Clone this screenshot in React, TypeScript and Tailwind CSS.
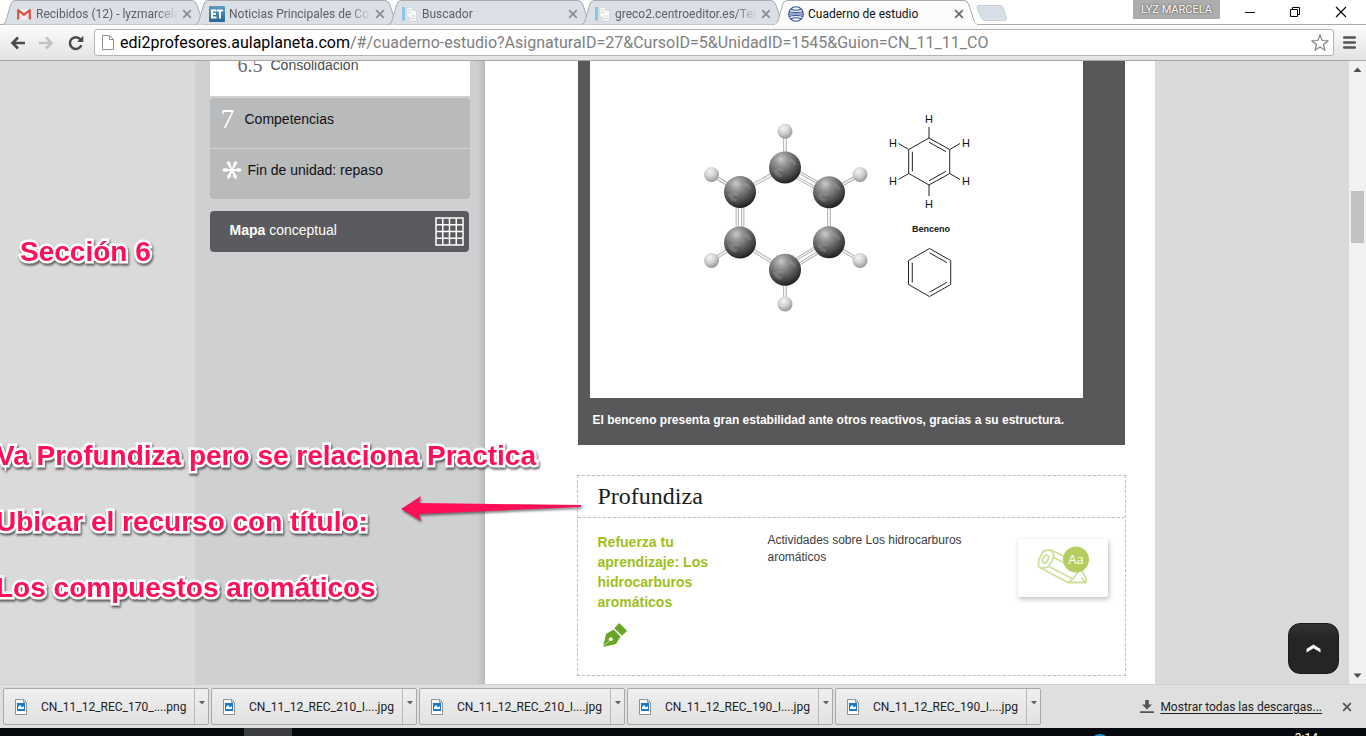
import type { ReactNode } from "react";

const uiFont = "font-['Roboto','Noto_Sans',sans-serif]";

function GmailIcon() {
  return (
    <svg viewBox="0 0 16 16" className="size-4">
      <rect x="1.5" y="3" width="13" height="10.5" fill="#f1ece9" />
      <path d="M2 13.5 6 9M14 13.5 10 9" stroke="#d8cfcb" strokeWidth="1" />
      <path d="M2.2 13.5V4L8 8.8 13.8 4v9.5" fill="none" stroke="#d9534a" strokeWidth="2.2" strokeLinejoin="round" />
    </svg>
  );
}

function NewsIcon() {
  return (
    <svg viewBox="0 0 16 16" className="size-4">
      <defs>
        <linearGradient id="news" x1="0" y1="0" x2="0" y2="1">
          <stop offset="0" stopColor="#5f9cc4" />
          <stop offset="1" stopColor="#256695" />
        </linearGradient>
      </defs>
      <rect width="16" height="16" rx="1" fill="url(#news)" />
      <path d="M2 3.5h5.5v2H4v1.6h3v1.8H4v1.6h3.5v2H2zM8 3.5h6v2h-2v7H9.900v-7H8z" fill="#fff" />
    </svg>
  );
}

function DocsIcon() {
  return (
    <svg viewBox="0 0 16 16" className="size-4">
      <rect x="0" y="1" width="3" height="13.5" fill="#8cc4e6" />
      <path d="M5 1.5h5.5v3h4V15H8v-4H5z" fill="#fafbfb" stroke="#c9ced3" strokeWidth=".6" />
      <path d="M6 4h3.5M6 6.5h3.5M9 10h4.5M9 12.5h4.5" stroke="#d0d4d8" strokeWidth="1" />
    </svg>
  );
}

function GlobeIcon() {
  return (
    <svg viewBox="0 0 16 16" className="size-4" fill="none" stroke="#2f4d94" strokeWidth="1.1">
      <circle cx="8" cy="8" r="7.3" />
      <path d="M2.8 3Q8 5.6 13.2 3M1.2 5.7q6.8 1.6 13.6 0M.8 8h14.4M1.2 10.3q6.8-1.6 13.6 0M2.8 13Q8 10.4 13.2 13" />
    </svg>
  );
}

function CloseGlyph({ color = "#8a8d91" }: { color?: string }) {
  return (
    <svg viewBox="0 0 10 10" className="size-2.5">
      <path d="M1.2 1.2 8.8 8.8M8.8 1.2 1.2 8.8" stroke={color} strokeWidth="1.7" />
    </svg>
  );
}

type TabInfo = { title: string; icon: ReactNode; active?: boolean };

const tabs: TabInfo[] = [
  { title: "Recibidos (12) - lyzmarcela", icon: <GmailIcon /> },
  { title: "Noticias Principales de Co", icon: <NewsIcon /> },
  { title: "Buscador", icon: <DocsIcon /> },
  { title: "greco2.centroeditor.es/Ter", icon: <DocsIcon /> },
  { title: "Cuaderno de estudio", icon: <GlobeIcon />, active: true },
];

function Tab({ title, icon, active }: TabInfo) {
  return (
    <div className={`relative h-[25px] w-[204px] -mr-[11px] ${active ? "z-10" : ""}`}>
      <svg viewBox="0 0 204 25" className="absolute inset-0 size-full">
        <path
          d="M0 24.5C3 24.5 3.5 22 4.5 19L8.5 5Q9.8 .5 13 .5H190Q193.5 .5 195 5L199.5 19C200.5 22 201 24.5 204 24.5"
          fill={active ? "#fcfcfc" : "#dbe0e7"}
          stroke="#a9abae"
        />
        {active && <path d="M1 24.5h202" stroke="#fcfcfc" strokeWidth="2" />}
      </svg>
      <div className="relative flex h-full items-center pt-0.5 pr-3.5 pl-3.5">
        {icon}
        <button
          className={`ml-1 w-[142px] overflow-hidden text-left text-xs whitespace-nowrap ${
            active ? "text-[#111]" : "mask-r-from-85% text-[#5d6064]"
          }`}
        >
          {title}
        </button>
        <button aria-label={`Cerrar ${title}`} className="ml-auto">
          <CloseGlyph color={active ? "#66686b" : "#8a8d91"} />
        </button>
      </div>
    </div>
  );
}

function TabStrip() {
  return (
    <header className="relative flex h-[25px] shrink-0 justify-between bg-white">
      <div className="absolute inset-x-0 bottom-0 h-px bg-[#a9abae]" />
      <div className="flex pl-0.5">
        {tabs.map((t) => (
          <Tab key={t.title} {...t} />
        ))}
        <button aria-label="Nueva pestaña" className="ml-2 h-[25px] w-8">
          <svg viewBox="0 0 32 25" className="h-full w-full">
            <path d="M3 5.5h22q2 0 3 2l3.5 10q.6 3-1.5 3H10q-2.5 0-3.5-2.5L2 8q-.5-2.5 1-2.5z" fill="#d8dee6" stroke="#c3c8ce" strokeWidth=".8" />
          </svg>
        </button>
      </div>
      <div className="flex">
        <button className="mr-[23px] h-[19px] w-[87px] bg-[#adadad] text-[11px] leading-[18px] text-white text-shadow-[0_0_2px_#222]">
          LYZ MARCELA
        </button>
        <button aria-label="Minimizar" className="w-[14px]">
          <svg viewBox="0 0 14 25" className="w-full">
            <path d="M2 12.5h10" stroke="#000" />
          </svg>
        </button>
        <button aria-label="Restaurar" className="ml-[31px] w-[14px]">
          <svg viewBox="0 0 14 25" className="w-full" fill="none" stroke="#000">
            <path d="M2.5 9.5h7v7h-7zM4.5 9V7.5h7v7H10" />
          </svg>
        </button>
        <button aria-label="Cerrar" className="mr-[18px] ml-[32px] w-[14px]">
          <svg viewBox="0 0 14 25" className="w-full">
            <path d="M2 7l10 10M12 7 2 17" stroke="#000" strokeWidth="1.1" />
          </svg>
        </button>
      </div>
    </header>
  );
}

function Toolbar() {
  return (
    <div className="flex h-9 shrink-0 items-center border-b border-[#a6a6a6] bg-linear-to-b from-[#fcfcfc] to-[#e3e3e3] pr-2.5 pl-2.5">
      <button aria-label="Atrás" className="mr-[14px]">
        <svg viewBox="0 0 15 14" className="w-[15px]">
          <path d="M15 7H2.5M8 1.5 2.5 7 8 12.5" fill="none" stroke="#4b4b4b" strokeWidth="2.6" />
        </svg>
      </button>
      <button aria-label="Adelante" className="mr-[14px]">
        <svg viewBox="0 0 15 14" className="w-[15px]">
          <path d="M0 7h12.5M7 1.5 12.5 7 7 12.5" fill="none" stroke="#c3c3c3" strokeWidth="2.6" />
        </svg>
      </button>
      <button aria-label="Recargar" className="mr-2.5">
        <svg viewBox="0 0 16 16" className="size-4">
          <path d="M13.3 10.2A5.9 5.9 0 1 1 12.3 4.2" fill="none" stroke="#4b4b4b" strokeWidth="2.5" />
          <path d="M15.3.8V7H9z" fill="#4b4b4b" />
        </svg>
      </button>
      <div className="flex h-[27px] min-w-0 flex-1 items-center rounded-[3px] border border-[#b3b3b3] bg-white pr-1 pl-[7px]">
        <svg viewBox="0 0 12 15" className="mr-1.5 w-3 shrink-0">
          <path d="M.5.5h7l4 4v10H.5zM7.5.5v4h4" fill="#fff" stroke="#8f8f8f" />
        </svg>
        <label htmlFor="url" className="text-base text-black">
          edi2profesores.aulaplaneta.com
        </label>
        <input
          id="url"
          type="text"
          defaultValue="/#/cuaderno-estudio?AsignaturaID=27&CursoID=5&UnidadID=1545&Guion=CN_11_11_CO"
          className="min-w-0 flex-1 bg-transparent text-base text-[#808080] outline-none"
        />
        <button aria-label="Añadir a marcadores">
          <svg viewBox="0 0 18 18" className="size-[18px]">
            <path d="M9 .8l2.1 5.7 6.1.2-4.8 3.8 1.7 5.9L9 13l-5.1 3.4 1.7-5.9L.8 6.7l6.1-.2z" fill="#fff" stroke="#808080" strokeWidth="1.1" strokeLinejoin="round" />
          </svg>
        </button>
      </div>
      <button aria-label="Menú" className="ml-[9px]">
        <svg viewBox="0 0 13 13" className="w-[13px]">
          <path d="M1.2 1.5h10.6M1.2 6.5h10.6M1.2 11.5h10.6" stroke="#555" strokeWidth="2.6" strokeLinecap="round" />
        </svg>
      </button>
    </div>
  );
}

function Sidebar() {
  return (
    <aside className="w-[290px] shrink-0 bg-[#cfd0d2] bg-linear-to-l from-[#b9babc] to-transparent to-[8px] pl-[15px] text-[14px] leading-5">
      <ul className="w-[260px]">
        <li className="flex h-[51px] items-start bg-white pt-2.5 pl-7 text-[#4a4a4a]">
          <a href="#6.5" className="flex items-center">
            <span className="mr-2 font-['Liberation_Serif',serif] text-xl leading-5 text-[#6b6b6d]">6.5</span>
            Consolidación
          </a>
        </li>
      </ul>
      <ul className="mt-0.5 w-[260px] overflow-hidden rounded bg-[#b8babc] text-[#111]">
        <li className="h-[51px] border-b border-[#d2d3d4]">
          <a href="#7" className="flex h-full items-center pb-2 pl-[11px]">
            <span className="w-6 font-['Liberation_Serif',serif] text-[28px] text-white">7</span>
            Competencias
          </a>
        </li>
        <li className="h-[50px]">
          <a href="#fin" className="flex h-full items-center pb-2 pl-3">
            <svg viewBox="0 0 20 20" className="mr-1.5 size-5" stroke="#fff" strokeLinecap="round">
              <path d="M10 10 6.5 3.5M10 10l3.5-6.5M10 10H3M10 10h7M10 10l-3.5 6.5M10 10l3.5 6.5" strokeWidth="2" />
              <path d="M7.3 4.4 6.5 3M12.7 4.4 13.5 3M4 10H2.3M16 10h1.7M7.3 15.6 6.5 17M12.7 15.6l.8 1.4" strokeWidth="3.4" />
            </svg>
            Fin de unidad: repaso
          </a>
        </li>
      </ul>
      <a href="#mapa" className="mt-3 flex h-[41px] w-[259px] items-center rounded bg-[#5b5a5e] pr-[5px] pl-5 text-white">
        <span className="flex-1 pb-1">
          <b>Mapa</b> conceptual
        </span>
        <svg viewBox="0 0 29 29" className="size-[29px]" fill="none" stroke="#fff" strokeWidth="1.5">
          <path d="M1 1h27v27H1zM7.75 1v27M14.5 1v27M21.25 1v27M1 7.75h27M1 14.5h27M1 21.25h27" />
        </svg>
      </a>
    </aside>
  );
}

type Point = [number, number];

const carbons: Point[] = [
  [785, 167.5],
  [829, 192.3],
  [829, 242.3],
  [785, 269.7],
  [740, 242.5],
  [740, 192],
];
const hydrogens: Point[] = [
  [785, 131.3],
  [860, 174.5],
  [860, 260.5],
  [785, 304],
  [711.5, 260.5],
  [711.5, 174.5],
];
const skeleton: Point[] = [
  [929, 138],
  [949.7, 149.5],
  [949.7, 173.5],
  [929, 185],
  [908.7, 173.5],
  [908.7, 149.5],
];
const labels: Point[] = [
  [929, 123],
  [966, 146.5],
  [966, 185],
  [929, 208],
  [893, 185],
  [893, 146.5],
];
const stubs: Point[] = [
  [929, 127],
  [960, 143.5],
  [960, 179.5],
  [929, 196],
  [898.5, 179.5],
  [898.5, 143.5],
];
const simple: Point[] = [
  [929.5, 248.5],
  [950.7, 260.5],
  [950.7, 284.5],
  [929.5, 296.5],
  [908.5, 284.5],
  [908.5, 260.5],
];

function Rod({ a, b, shift = 0, width = 3.4 }: { a: Point; b: Point; shift?: number; width?: number }) {
  const len = Math.hypot(b[0] - a[0], b[1] - a[1]);
  const nx = (-(b[1] - a[1]) / len) * shift;
  const ny = ((b[0] - a[0]) / len) * shift;
  const d = `M${a[0] + nx} ${a[1] + ny}L${b[0] + nx} ${b[1] + ny}`;
  return (
    <>
      <path d={d} stroke="#a0a0a0" strokeWidth={width} />
      <path d={d} stroke="#f0f0f0" strokeWidth={width - 1.4} />
    </>
  );
}

function ring(points: Point[]) {
  const cx = (points[0][0] + points[3][0]) / 2;
  const cy = (points[0][1] + points[3][1]) / 2;
  const inner = points.map(([x, y]): Point => [cx + (x - cx) * 0.82, cy + (y - cy) * 0.82]);
  const outline = `M${points.map((p) => p.join(" ")).join("L")}Z`;
  const doubles = [0, 2, 4].map((i) => `M${inner[i].join(" ")}L${inner[i + 1].join(" ")}`).join("");
  return outline + doubles;
}

function Benzene() {
  return (
    <svg viewBox="590 45 493 353" className="block w-full bg-white" role="img" aria-label="Benceno">
      <defs>
        <radialGradient id="carbon" cx=".38" cy=".24" r=".8">
          <stop offset="0" stopColor="#cacac8" />
          <stop offset=".2" stopColor="#a0a09e" />
          <stop offset=".5" stopColor="#6c6c6a" />
          <stop offset=".8" stopColor="#3c3c3a" />
          <stop offset="1" stopColor="#181816" />
        </radialGradient>
        <radialGradient id="hydrogen" cx=".4" cy=".3" r=".75">
          <stop offset="0" stopColor="#f6f6f6" />
          <stop offset=".5" stopColor="#cecece" />
          <stop offset="1" stopColor="#8d8d8d" />
        </radialGradient>
      </defs>
      {carbons.map((c, i) => {
        const next = carbons[(i + 1) % 6];
        return (
          <g key={i}>
            <Rod a={c} b={hydrogens[i]} />
            {i % 2 === 0 ? (
              <>
                <Rod a={c} b={next} shift={-2.8} width={3} />
                <Rod a={c} b={next} shift={2.8} width={3} />
              </>
            ) : (
              <Rod a={c} b={next} />
            )}
          </g>
        );
      })}
      {hydrogens.map(([x, y], i) => (
        <circle key={i} cx={x} cy={y} r="7.5" fill="url(#hydrogen)" />
      ))}
      {carbons.map(([x, y], i) => (
        <g key={i} transform={`translate(${x} ${y})`}>
          <circle r="16" fill="url(#carbon)" />
          <path d="M-12 2q1 7 8 8l2-3q-5 0-5-5zM-8 1q2 3 6 3l1-3q-4 1-5-1zM5-9q5 1 6 6l-2 1q-1-4-5-4z" fill="#b5b5b5" opacity=".28" />
        </g>
      ))}
      <g fill="none" stroke="#222" strokeWidth="1">
        <path d={ring(skeleton)} />
        <path d={skeleton.map((p, i) => `M${p.join(" ")}L${stubs[i].join(" ")}`).join("")} />
        <path d={ring(simple)} />
      </g>
      <g fontFamily="Liberation Sans, sans-serif" textAnchor="middle" fill="#111">
        {labels.map(([x, y], i) => (
          <text key={i} x={x} y={y} fontSize="11">
            H
          </text>
        ))}
        <text x="931" y="232" fontSize="9" fontWeight="bold">
          Benceno
        </text>
      </g>
    </svg>
  );
}

function PenIcon() {
  return (
    <svg viewBox="0 0 26 26" className="size-[26px]">
      <path d="M1 25 4 12l7.5-4.5 7 7L14 22z" fill="#68a524" />
      <path d="M1 25 8 18" stroke="#fff" strokeWidth=".6" />
      <circle cx="8.8" cy="17.2" r="1.9" fill="#fff" />
      <path d="m12.3 6.2 5-5.2 7.7 7.7-5 5z" fill="#68a524" />
    </svg>
  );
}

function PencilCard() {
  return (
    <svg viewBox="0 0 90 58" className="w-full">
      <g fill="none" stroke="#cfe09d" strokeWidth="1.8" strokeLinejoin="round">
        <path d="M20.5 26.5 21 20l4.5-8 7-1.2 3.5 5-2 6.5-4.5 6-7 .7z" />
        <ellipse cx="27.5" cy="20" rx="2.6" ry="4.3" transform="rotate(25 27.5 20)" />
        <path d="M32.5 10.8 47 18M35 18l12 6.5M30 27l25 13M22 28.5 50 43.5h18v-4L63.5 31 60 33l-5 7-5 3.5M63.5 38.5l4 5" />
      </g>
      <circle cx="58" cy="20.5" r="13" fill="#b5cd5f" />
      <text x="58" y="25" fontSize="13" fill="#fff" textAnchor="middle" fontFamily="Open Sans, sans-serif">
        Aa
      </text>
    </svg>
  );
}

function Content() {
  return (
    <main className="min-w-0 flex-1 bg-white pr-[29px] pl-[92px]">
      <figure className="mx-px bg-[#58585a] pr-[42px] pl-3">
        <Benzene />
        <figcaption className="pt-3 pb-[15px] pl-[3px] text-[12px] leading-5 font-bold text-white">
          El benceno presenta gran estabilidad ante otros reactivos, gracias a su estructura.
        </figcaption>
      </figure>
      <section className="mt-[30px] h-[201px] border border-dashed border-[#bdbdbd]">
        <h2 className="h-[42px] border-b border-dashed border-[#bdbdbd] pl-5 font-['Liberation_Serif',serif] text-2xl leading-[41px] text-[#1c1c1c]">
          Profundiza
        </h2>
        <div className="flex pt-3.5 pl-5">
          <div className="w-[170px]">
            <h3 className="w-32 text-[14px] leading-5 font-bold text-[#9dc01b]">
              <a href="#refuerza">Refuerza tu aprendizaje: Los hidrocarburos aromáticos</a>
            </h3>
            <div className="mt-2.5 pl-1">
              <PenIcon />
            </div>
          </div>
          <p className="w-[220px] text-[12px] leading-[17px] text-[#3c3c3c]">
            Actividades sobre Los hidrocarburos aromáticos
          </p>
          <a
            href="#actividad"
            aria-label="Abrir actividad"
            className="mt-[7px] mr-[17px] ml-auto h-[58px] w-[90px] rounded-xs bg-white shadow-[1px_2px_5px_#bbb]"
          >
            <PencilCard />
          </a>
        </div>
      </section>
    </main>
  );
}

function Scrollbar() {
  return (
    <div className="flex w-[17px] shrink-0 flex-col items-center bg-[#f1f1f1]">
      <svg viewBox="0 0 17 17" className="w-full">
        <path d="M4.5 11 8.5 6.5 12.5 11z" fill="#505050" />
      </svg>
      <div className="mt-[113px] h-[52px] w-[13px] bg-[#c1c1c1]" />
      <svg viewBox="0 0 17 17" className="mt-auto w-full">
        <path d="M4.5 6.5 8.5 11 12.5 6.5z" fill="#505050" />
      </svg>
    </div>
  );
}

const noteStyle =
  "absolute text-[28px] leading-[33px] font-bold whitespace-nowrap text-[#ff0f57] [-webkit-text-stroke:5px_white] [paint-order:stroke_fill] [stroke-linejoin:round] drop-shadow-[1px_2px_1px_#0009]";

function Annotations() {
  return (
    <>
      <p className={`${noteStyle} top-[174px] left-5`}>Sección 6</p>
      <p className={`${noteStyle} top-[378px] -left-1`}>Va Profundiza pero se relaciona Practica</p>
      <p className={`${noteStyle} top-[444px] -left-1`}>Ubicar el recurso con título:</p>
      <p className={`${noteStyle} top-[510px] -left-1`}>Los compuestos aromáticos</p>
      <svg viewBox="0 0 182 32" className="absolute top-[433px] left-[401px] w-[182px] drop-shadow-[1px_2px_1px_#0007]">
        <path d="M0 15 20 2l-2 7 162 2v2L18 20l2 7z" fill="#ff0f57" />
      </svg>
    </>
  );
}

const downloads = [
  "CN_11_12_REC_170_....png",
  "CN_11_12_REC_210_I....jpg",
  "CN_11_12_REC_210_I....jpg",
  "CN_11_12_REC_190_I....jpg",
  "CN_11_12_REC_190_I....jpg",
];

function DownloadBar() {
  return (
    <footer className="flex h-11 shrink-0 items-center gap-0.5 border-t border-[#d0d0d0] bg-[#dfdfdf] pl-[3px] text-xs text-[#222]">
      {downloads.map((name, i) => (
        <div key={i} className="flex h-[37px] w-[206px] rounded-xs border border-[#a9a9a9] bg-linear-to-b from-[#efefef] to-[#e2e2e2]">
          <button className="flex flex-1 items-center pl-[11px]">
            <svg viewBox="0 0 12 16" className="mr-[14px] w-3">
              <path d="M.5.5h8l3 3v12H.5z" fill="#fff" stroke="#909090" />
              <path d="M8.5.5v3h3" fill="none" stroke="#909090" />
              <path d="M2 4h8v8H2z" fill="#1878cf" />
              <path d="M3 10V8l2-2 2 2.5L9 7v3z" fill="#fff" />
            </svg>
            {name}
          </button>
          <button aria-label="Opciones" className="w-[14px] border-l border-[#b9b9b9]">
            <svg viewBox="0 0 13 35" className="w-full">
              <path d="M4 12h6l-3 3.5z" fill="#666" />
            </svg>
          </button>
        </div>
      ))}
      <a href="#descargas" className="ml-auto flex items-center">
        <svg viewBox="0 0 14 14" className="mr-1.5 w-3.5">
          <path d="M5.2 0h3.6v4.5H12L7 9.5 2 4.5h3.2zM0 11.2h14v1.8H0z" fill="#555" />
        </svg>
        <span className="underline underline-offset-2">Mostrar todas las descargas...</span>
      </a>
      <button aria-label="Cerrar descargas" className="mr-3.5 ml-[18px]">
        <CloseGlyph color="#555" />
      </button>
    </footer>
  );
}

function Taskbar() {
  return (
    <div className="flex h-2 shrink-0 overflow-hidden bg-[#05080c] pl-[244px] text-white">
      <div className="h-full w-12 bg-[#3b3d40]" />
      <div className="mt-1.5 mr-[185px] ml-auto size-5 rounded-full bg-[#1b8fd6]" />
      <span className="mt-0.5 mr-12 text-xs leading-4">3:14</span>
    </div>
  );
}

export default function App() {
  return (
    <div className={`flex h-screen flex-col overflow-hidden ${uiFont}`}>
      <TabStrip />
      <Toolbar />
      <div className="relative flex min-h-0 flex-1 overflow-hidden bg-[#dadada] font-['Liberation_Sans',Arial,sans-serif]">
        <div className="min-w-0 flex-1">
          <div className="mx-auto -mt-4 flex min-h-[calc(100%+16px)] max-w-[960px]">
            <Sidebar />
            <Content />
          </div>
        </div>
        <Scrollbar />
        <button
          aria-label="Subir"
          className="absolute right-[27px] bottom-2.5 flex size-[51px] items-center justify-center rounded-xl border border-[#1a1a1a] bg-linear-to-b from-[#333] to-[#252525] to-30%"
        >
          <svg viewBox="0 0 15 9" className="w-[15px]">
            <path d="M.5 8.5V5L7.5.5l7 4.5v3.5L7.5 4.3z" fill="#fff" />
          </svg>
        </button>
        <Annotations />
      </div>
      <DownloadBar />
      <Taskbar />
    </div>
  );
}
